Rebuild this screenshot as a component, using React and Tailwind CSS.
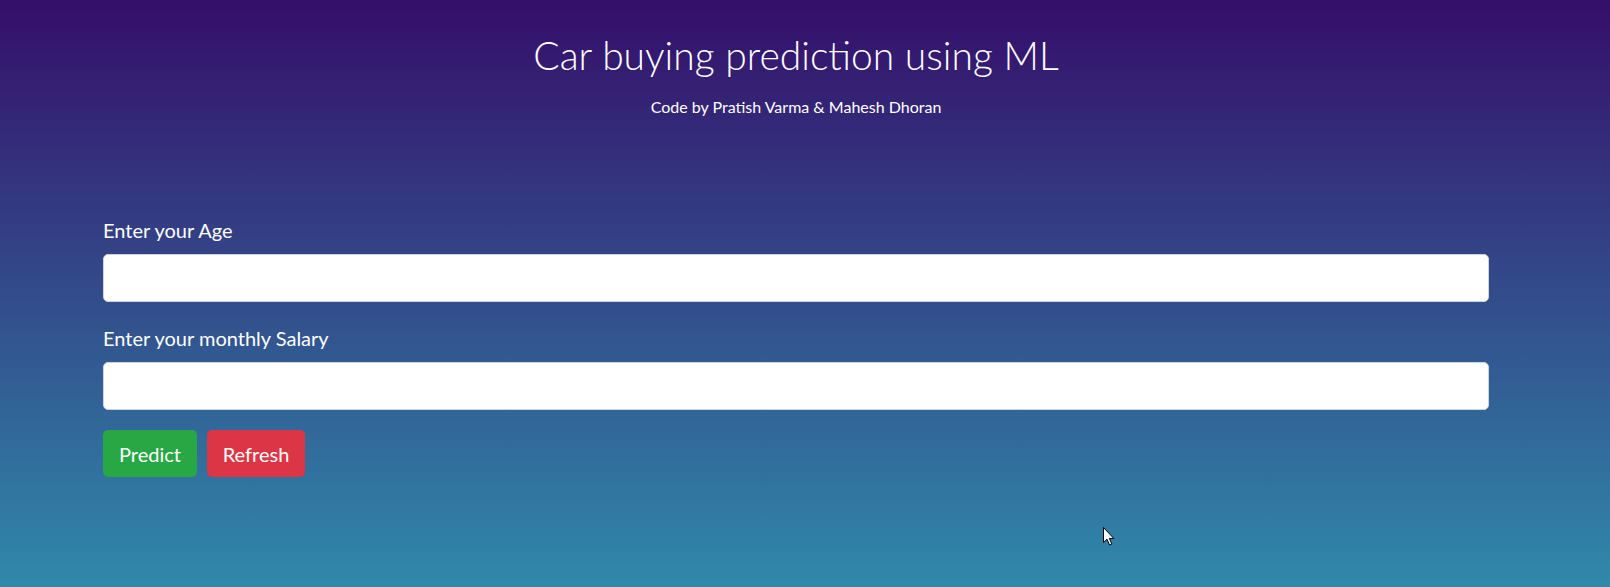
import { useState } from 'react';

export default function App() {
  const [age, setAge] = useState('');
  const [salary, setSalary] = useState('');

  const refresh = () => {
    setAge('');
    setSalary('');
  };

  return (
    <div className="relative h-[587px] w-full overflow-hidden bg-linear-to-b/srgb from-[#350e6a] to-[#3089ab] font-['Lato','Open_Sans',sans-serif] text-white">
      <div className="pl-[103px] pr-[121px]">
        {/* Header */}
        <div className="pt-[31px] text-center">
          <h1 className="text-[39px] leading-[48px] font-light">Car buying prediction using ML</h1>
          <p className="mt-[16px] text-[16px] leading-[24px]">Code by Pratish Varma &amp; Mahesh Dhoran</p>
        </div>

        {/* Form */}
        <form className="mt-[96px]" onSubmit={(e) => e.preventDefault()}>
          <div className="mb-[21px]">
            <label className="mb-[9px] block text-[20px] leading-[30px]">Enter your Age</label>
            <input
              value={age}
              onChange={(e) => setAge(e.target.value)}
              className="block h-[48px] w-full rounded-[5px] border border-[#ced4da] bg-white px-4 text-[20px] text-[#495057] outline-none"
            />
          </div>
          <div className="mb-[20px]">
            <label className="mb-[9px] block text-[20px] leading-[30px]">Enter your monthly Salary</label>
            <input
              value={salary}
              onChange={(e) => setSalary(e.target.value)}
              className="block h-[48px] w-full rounded-[5px] border border-[#ced4da] bg-white px-4 text-[20px] text-[#495057] outline-none"
            />
          </div>
          <div className="flex gap-[10px]">
            <button type="submit" className="h-[47px] w-[94px] rounded-[5px] bg-[#28a745] text-[20px] text-white">
              Predict
            </button>
            <button type="button" onClick={refresh} className="h-[47px] w-[98px] rounded-[5px] bg-[#dc3545] text-[20px] text-white">
              Refresh
            </button>
          </div>
        </form>
      </div>

      {/* mouse pointer */}
      <svg className="absolute left-[1103px] top-[527px]" width="12" height="19" viewBox="0 0 12 19">
        <path d="M0.5 0.5 L0.5 15.5 L4 12.2 L6.6 18 L8.8 17 L6.3 11.4 L10.8 11.4 Z" fill="#fff" stroke="#000" strokeWidth="1" strokeLinejoin="round" />
      </svg>
    </div>
  );
}
